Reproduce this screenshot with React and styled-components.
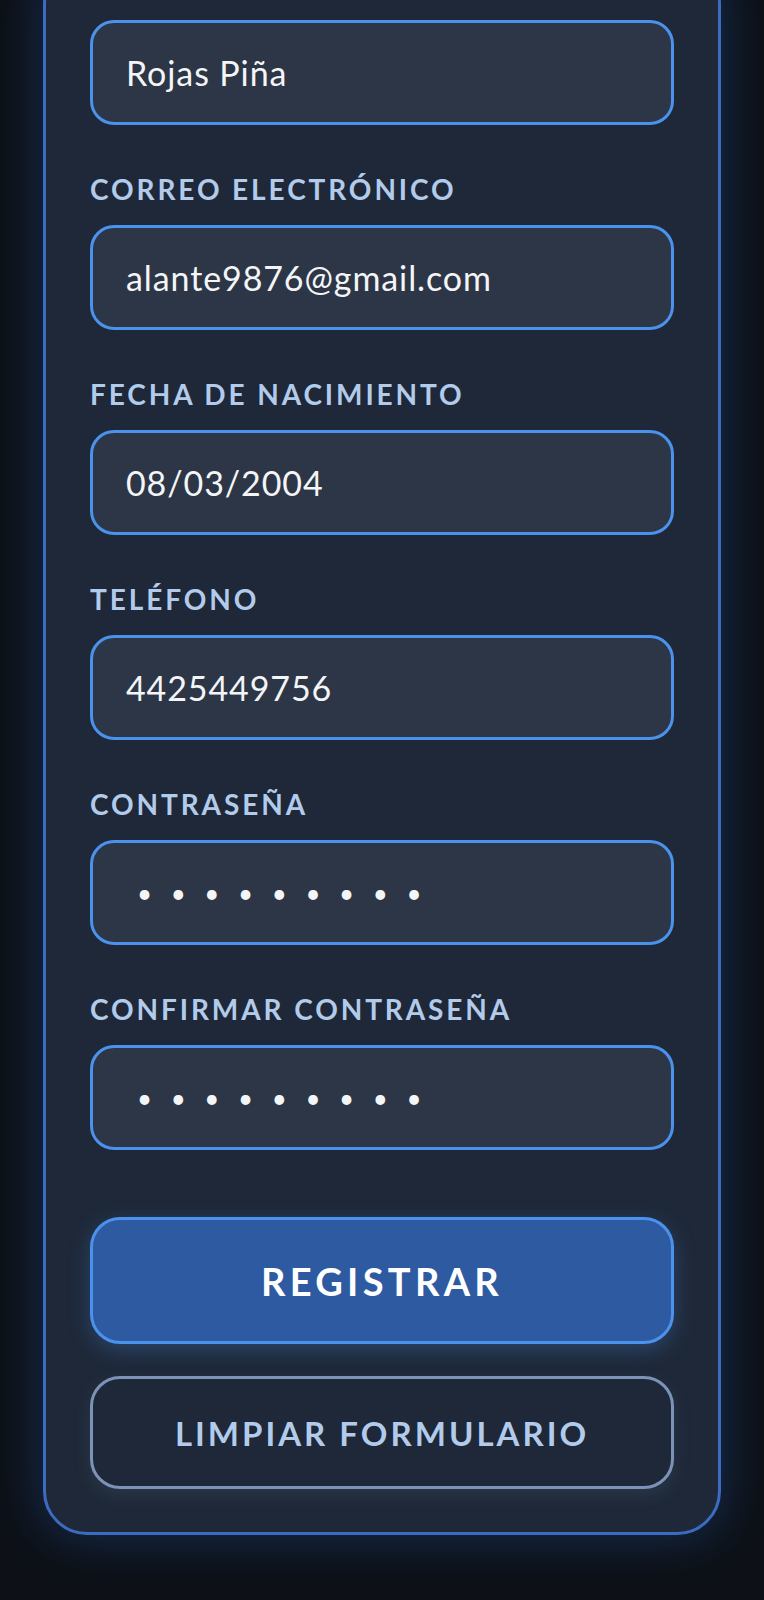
import styled, { createGlobalStyle } from "styled-components";

const GlobalStyle = createGlobalStyle`
  * {
    box-sizing: border-box;
  }
  body {
    margin: 0;
    background: #0d1117;
    font-family: Lato, "Open Sans", "Liberation Sans", sans-serif;
  }
`;

const Page = styled.div`
  min-height: 1600px;
  overflow: hidden;
`;

const Card = styled.form`
  width: 678px;
  margin: -40px auto 0;
  padding: 57px 44px 43px;
  background: #1e2838;
  border: 3px solid #3c6cc2;
  border-radius: 44px;
  box-shadow: 0 0 45px 6px rgba(46, 104, 204, 0.28);
  display: flex;
  flex-direction: column;
`;

const Fields = styled.div`
  display: flex;
  flex-direction: column;
  gap: 48px;
`;

const Field = styled.div`
  display: flex;
  flex-direction: column;
`;

const Label = styled.label`
  font-size: 28px;
  line-height: 32px;
  font-weight: 700;
  letter-spacing: 2.9px;
  color: #b3cbeb;
  margin-bottom: 20px;
`;

const Input = styled.input`
  height: 105px;
  width: 100%;
  padding: 0 30px 0 33px;
  background: #2d3646;
  border: 3px solid #4a92ec;
  border-radius: 24px;
  color: #f3f5f7;
  font-family: inherit;
  font-size: 34px;
  letter-spacing: 0.9px;
  outline: none;
`;

const PasswordInput = styled(Input)`
  padding-left: 44px;
  font-size: 26px;
  letter-spacing: 18.6px;
`;

const Button = styled.button`
  width: 100%;
  font-family: inherit;
  border-radius: 30px;
  cursor: pointer;
  text-transform: uppercase;
`;

const PrimaryButton = styled(Button)`
  margin-top: 67px;
  height: 127px;
  background: #2d5aa1;
  border: 3px solid #4a92ec;
  color: #ffffff;
  font-size: 38px;
  font-weight: 700;
  letter-spacing: 4.3px;
  box-shadow: 0 6px 22px rgba(74, 146, 236, 0.28);
`;

const SecondaryButton = styled(Button)`
  margin-top: 32px;
  height: 113px;
  background: transparent;
  border: 3px solid #7b93b7;
  color: #b3cbeb;
  font-size: 33px;
  font-weight: 700;
  letter-spacing: 3px;
  box-shadow: 0 6px 18px rgba(123, 147, 183, 0.14);
`;

const fields = [
  { label: "Apellidos", value: "Rojas Piña", type: "text", hideLabel: true },
  { label: "Correo electrónico", value: "alante9876@gmail.com", type: "email" },
  { label: "Fecha de nacimiento", value: "08/03/2004", type: "text" },
  { label: "Teléfono", value: "4425449756", type: "tel" },
  { label: "Contraseña", value: "123456789", type: "password" },
  { label: "Confirmar contraseña", value: "123456789", type: "password" },
];

export default function App() {
  return (
    <Page>
      <GlobalStyle />
      <Card onSubmit={(e) => e.preventDefault()}>
        <Fields>
          {fields.map((f) => {
            const Control = f.type === "password" ? PasswordInput : Input;
            return (
              <Field key={f.label}>
                {!f.hideLabel && <Label>{f.label.toUpperCase()}</Label>}
                <Control
                  type={f.type}
                  defaultValue={f.value}
                  aria-label={f.label}
                  readOnly
                />
              </Field>
            );
          })}
        </Fields>
        <PrimaryButton type="submit">Registrar</PrimaryButton>
        <SecondaryButton type="button">Limpiar formulario</SecondaryButton>
      </Card>
    </Page>
  );
}
